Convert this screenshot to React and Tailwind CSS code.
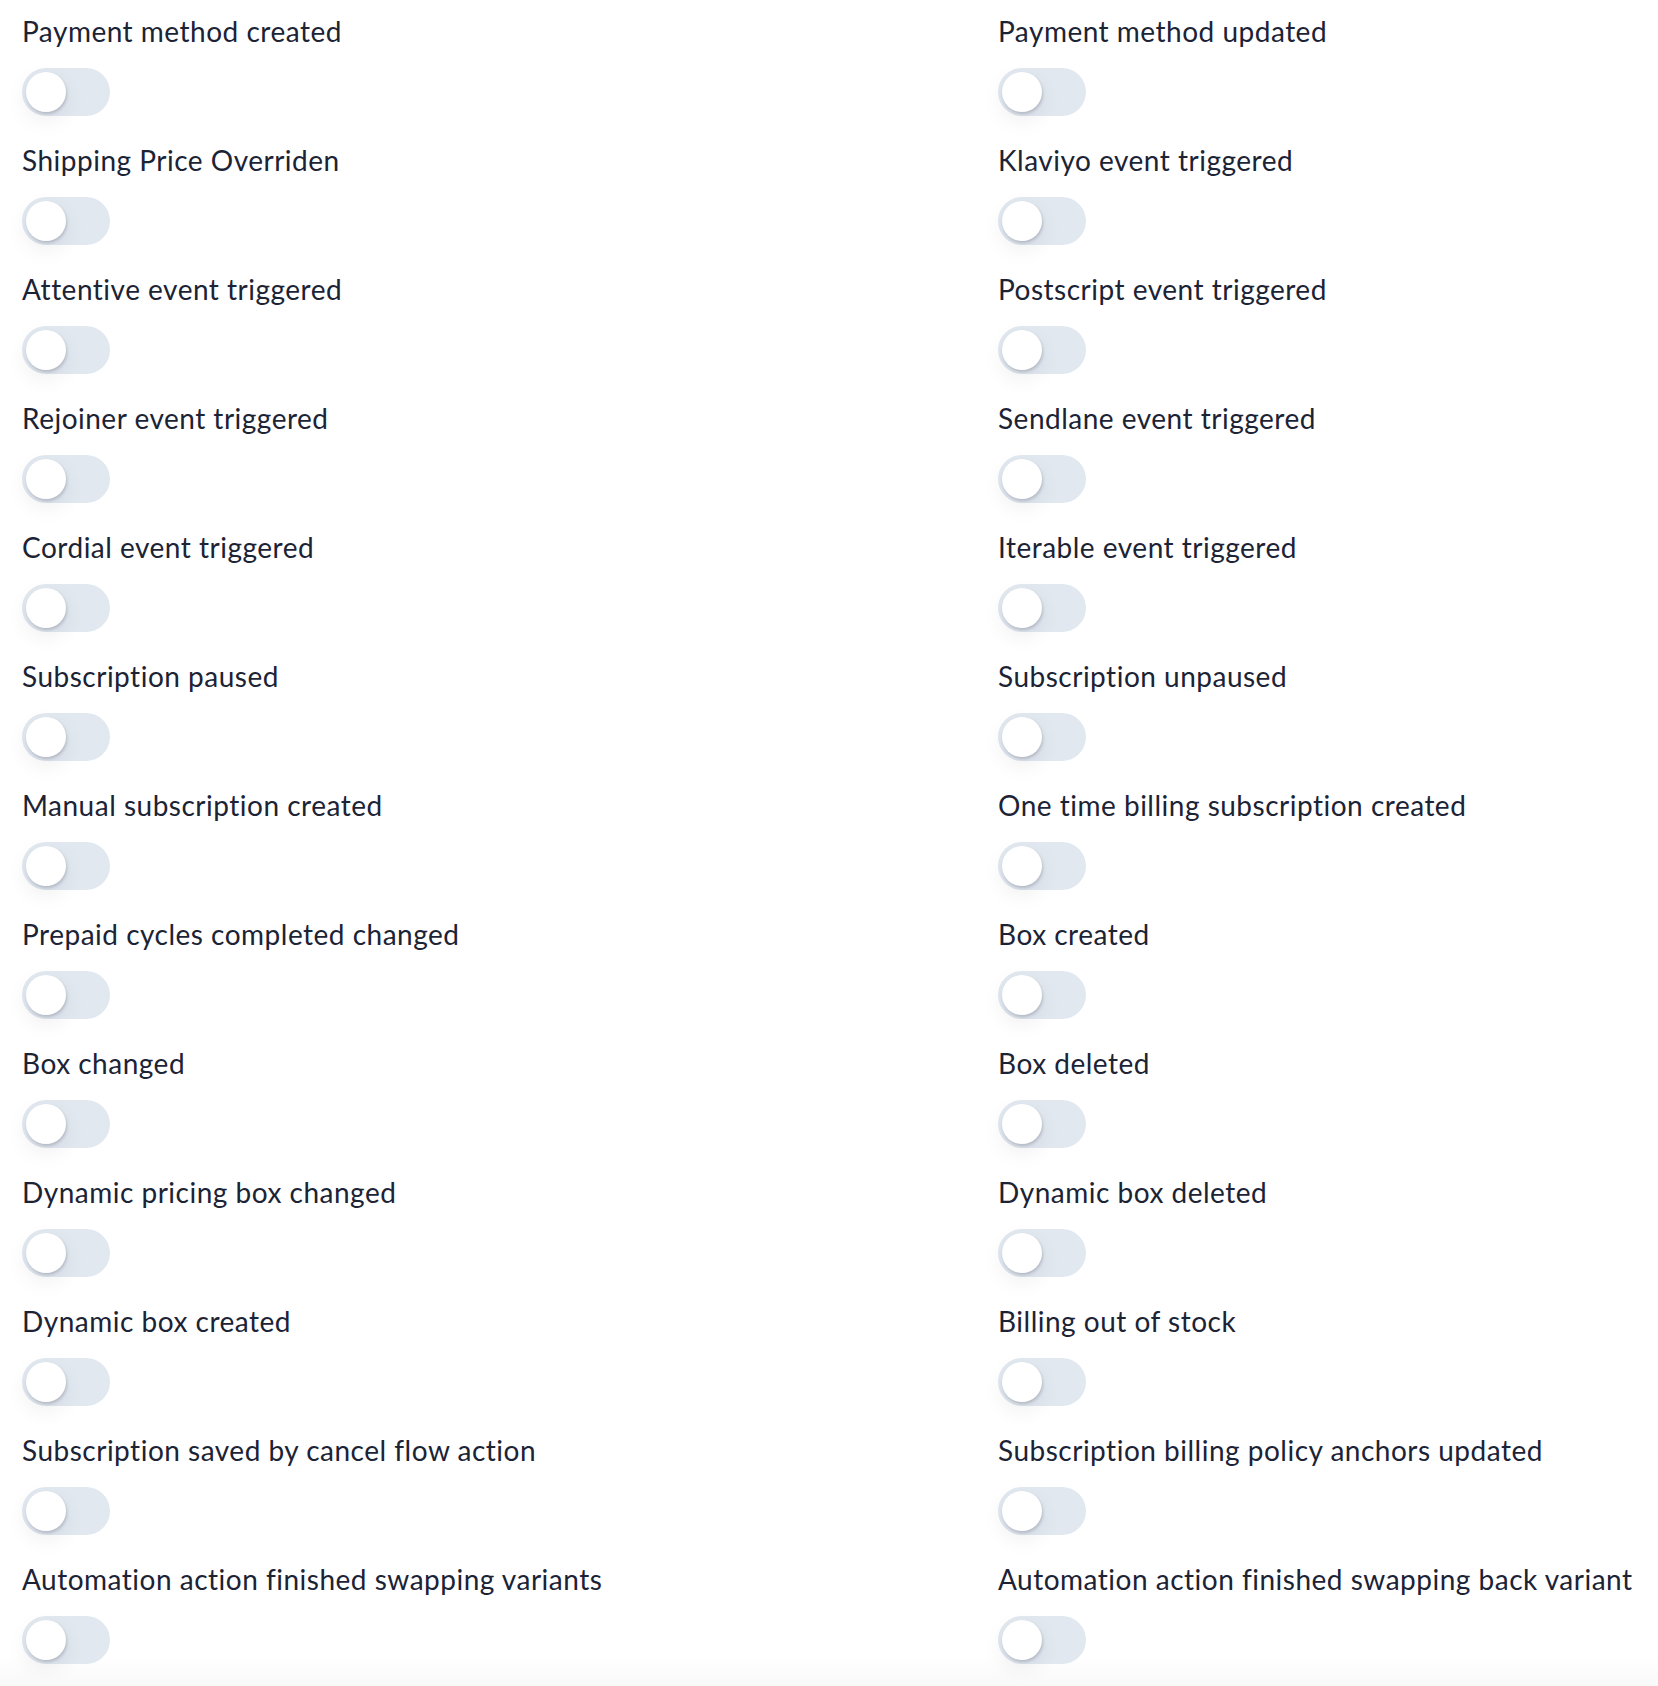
import { useState } from 'react'

const EVENTS = [
  ['Payment method created', 'Payment method updated'],
  ['Shipping Price Overriden', 'Klaviyo event triggered'],
  ['Attentive event triggered', 'Postscript event triggered'],
  ['Rejoiner event triggered', 'Sendlane event triggered'],
  ['Cordial event triggered', 'Iterable event triggered'],
  ['Subscription paused', 'Subscription unpaused'],
  ['Manual subscription created', 'One time billing subscription created'],
  ['Prepaid cycles completed changed', 'Box created'],
  ['Box changed', 'Box deleted'],
  ['Dynamic pricing box changed', 'Dynamic box deleted'],
  ['Dynamic box created', 'Billing out of stock'],
  ['Subscription saved by cancel flow action', 'Subscription billing policy anchors updated'],
  ['Automation action finished swapping variants', 'Automation action finished swapping back variant'],
].flat()

function Toggle({ checked, onChange }) {
  return (
    <button
      type="button"
      role="switch"
      aria-checked={checked}
      onClick={() => onChange(!checked)}
      className={`relative block h-[48px] w-[88px] rounded-full transition-colors ${checked ? 'bg-[#4f46e5]' : 'bg-[#e2e8f0]'}`}
    >
      <span
        className={`absolute top-[4px] h-[40px] w-[40px] rounded-full bg-white shadow-[1px_2px_3px_rgba(15,23,42,0.18),0_8px_22px_rgba(15,23,42,0.07)] transition-all ${checked ? 'left-[44px]' : 'left-[4px]'}`}
      />
    </button>
  )
}

export default function App() {
  const [enabled, setEnabled] = useState({})

  return (
    <div className="min-h-[1686px] bg-linear-to-b from-white from-[98%] to-[#f8f8f8]" style={{ fontFamily: 'Lato, "Open Sans", sans-serif' }}>
      <div className="grid grid-cols-[976px_1fr] pl-[22px] pt-[13px]">
        {EVENTS.map(name => (
          <div key={name} className="pb-[26px]">
            <div className="whitespace-nowrap text-[28px] leading-[36px] tracking-[0.5px] text-[#1b2335]">{name}</div>
            <div className="mt-[19px]">
              <Toggle checked={!!enabled[name]} onChange={v => setEnabled(s => ({ ...s, [name]: v }))} />
            </div>
          </div>
        ))}
      </div>
    </div>
  )
}
